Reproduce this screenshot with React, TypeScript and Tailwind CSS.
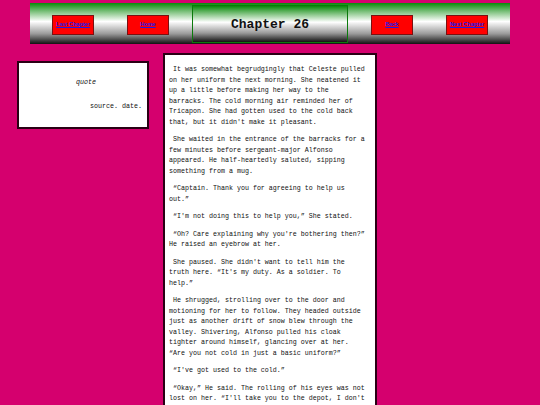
import React from 'react';

const paragraphs: string[] = [
  'It was somewhat begrudgingly that Celeste pulled on her uniform the next morning. She neatened it up a little before making her way to the barracks. The cold morning air reminded her of Tricapon. She had gotten used to the cold back that, but it didn\'t make it pleasant.',
  'She waited in the entrance of the barracks for a few minutes before sergeant-major Alfonso appeared. He half-heartedly saluted, sipping something from a mug.',
  '“Captain. Thank you for agreeing to help us out.”',
  '“I\'m not doing this to help you,” She stated.',
  '“Oh? Care explaining why you\'re bothering then?” He raised an eyebrow at her.',
  'She paused. She didn\'t want to tell him the truth here. “It\'s my duty. As a soldier. To help.”',
  'He shrugged, strolling over to the door and motioning for her to follow. They headed outside just as another drift of snow blew through the valley. Shivering, Alfonso pulled his cloak tighter around himself, glancing over at her. “Are you not cold in just a basic uniform?”',
  '“I\'ve got used to the cold.”',
  '“Okay,” He said. The rolling of his eyes was not lost on her. “I\'ll take you to the depot, I don\'t know what you think you\'ll find there though.”',
];

const bar = 'bg-[linear-gradient(to_bottom,#0a8a0a_0%,#ffffff_45%,#9a9a9a_75%,#111111_100%)]';

function NavButton({ label }: { label: string }) {
  return (
    <div className="flex h-[20px] w-[42px] shrink-0 items-center justify-center border border-[#7a1010] bg-[#ff0000]">
      <a
        href="#"
        className="font-['Liberation_Sans',sans-serif] text-[5.5px] font-bold leading-none text-[#1a1aee] underline"
      >
        {label}
      </a>
    </div>
  );
}

export default function App() {
  return (
    <div className="min-h-screen bg-[#d5006e] pt-[3px] font-['Liberation_Mono',monospace] text-[#111]">
      {/* top nav bar */}
      <div className={`mx-auto flex h-[41px] w-[480px] items-center ${bar}`}>
        <div className="ml-[22px] mt-[3px]">
          <NavButton label="Last Chapter" />
        </div>
        <div className="ml-[33px] mt-[3px]">
          <NavButton label="Home" />
        </div>
        <div
          className={`ml-[23px] mt-[1px] flex h-[38px] w-[156px] items-center justify-center border-[1.5px] border-[#0b7a0b] ${bar}`}
        >
          <h1 className="text-[13px] font-bold leading-none text-[#111]">Chapter 26</h1>
        </div>
        <div className="ml-[23px] mt-[3px]">
          <NavButton label="Back" />
        </div>
        <div className="ml-[33px] mt-[3px]">
          <NavButton label="Next Chapter" />
        </div>
      </div>

      <div className="mt-[9px] flex items-start pl-[17px]">
        {/* quote box */}
        <div className="mt-[8px] h-[68px] w-[132px] shrink-0 border-2 border-[#2a0014] bg-white pt-[14px] text-[6.67px] leading-[10.5px]">
          <p className="pl-[6px] text-center italic">quote</p>
          <p className="mt-[13px] pr-[5px] text-right">source. date.</p>
        </div>

        {/* chapter text */}
        <div className="ml-[14px] w-[214px] shrink-0 border-2 border-[#2a0014] bg-white pb-[20px] pl-[4px] pr-[8px] pt-[9px]">
          <div className="flex w-[198px] flex-col gap-[7px] text-[6.667px] leading-[10.5px]">
            {paragraphs.map((p, i) => (
              <p key={i}>{'\u00a0' + p}</p>
            ))}
          </div>
        </div>
      </div>
    </div>
  );
}
